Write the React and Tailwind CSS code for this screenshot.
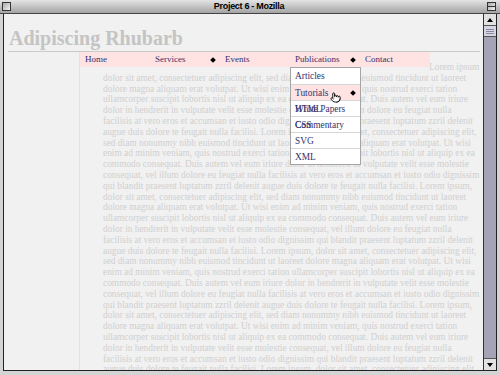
import React from "react";
import { Pointer } from "lucide-react";

const base =
  "dolor sit amet, consectetuer adipiscing elit, sed diam nonummy nibh euismod tincidunt ut laoreet dolore magna aliquam erat volutpat. Ut wisi enim ad minim veniam, quis nostrud exerci tation ullamcorper suscipit lobortis nisl ut aliquip ex ea commodo consequat. Duis autem vel eum iriure dolor in hendrerit in vulputate velit esse molestie consequat, vel illum dolore eu feugiat nulla facilisis at vero eros et accumsan et iusto odio dignissim qui blandit praesent luptatum zzril delenit augue duis dolore te feugait nulla facilisi.";
const body =
  "Lorem ipsum " +
  base +
  " Lorem ipsum, " +
  base +
  " Lorem ipsum, " +
  base +
  " Lorem ipsum, " +
  base +
  " Lorem ipsum, " +
  base +
  " Lorem ipsum, " +
  base +
  " Lorem ipsum, " +
  base;

function Diamond() {
  return <span className="block w-[4px] h-[4px] rotate-45 bg-black shrink-0" />;
}

function NavCell({ label, arrow }) {
  return (
    <div className="w-[70px] h-full px-[5px] flex items-center justify-between">
      <span className="leading-none">{label}</span>
      {arrow && <Diamond />}
    </div>
  );
}

function MenuItem({ children, first, active, arrow }) {
  return (
    <div
      className={
        "h-[16px] pl-[4px] pr-[5px] flex items-center justify-between leading-[16px] " +
        (first ? "" : "border-t border-[#d6d6d6] ") +
        (active ? "bg-[#ffe3e3]" : "bg-white")
      }
    >
      {children}
      {arrow && <Diamond />}
    </div>
  );
}

function Stack({ a, b }) {
  return (
    <span className="grid">
      <span className="col-start-1 row-start-1">{a}</span>
      <span className="col-start-1 row-start-1">{b}</span>
    </span>
  );
}

export default function App() {
  return (
    <div className="w-[500px] h-[375px] bg-[#d4d4d4] flex flex-col overflow-hidden">
      {/* title bar */}
      <div className="h-[14px] shrink-0 flex items-center px-[2px] bg-gradient-to-b from-[#e4e4e4] to-[#a4a4a4] border-b border-[#444]">
        <div className="w-[9px] h-[9px] border border-[#333] bg-gradient-to-br from-[#a8a8a8] to-[#f4f4f4]" />
        <div className="flex-1 flex justify-center">
          <span className="font-['Liberation_Sans',sans-serif] font-bold text-[9px] tracking-[-0.3px] leading-none text-black">
            Project 6 - Mozilla
          </span>
        </div>
        <div className="w-[9px] h-[9px] mr-[2px] border border-[#333] bg-gradient-to-br from-[#a8a8a8] to-[#f4f4f4] flex flex-col justify-center">
          <div className="h-[1px] bg-[#333]" />
        </div>
      </div>

      {/* window body */}
      <div className="flex-1 mx-[3px] mb-[4px] flex border-l border-r border-b border-[#222] min-h-0">
        <div className="flex-1 min-w-0 bg-[#f1f1f1] flex flex-col overflow-hidden font-['Liberation_Serif',serif]">
          <h1 className="mt-[12px] ml-[5px] text-[20px] leading-[24px] font-bold text-[#c4c4c4]">
            Adipiscing Rhubarb
          </h1>
          <div className="mt-[1px] ml-[4px] mr-[3px] h-[1px] bg-[#cacaca] shrink-0" />
          <div className="flex flex-1 min-h-0">
            <div className="w-[76px] shrink-0 border-r border-[#e2e2e2]" />
            <div className="flex-1 min-w-0 flex flex-col">
              <div className="relative z-10">
                <div className="h-[15px] w-[350px] bg-[#ffe2e2] flex text-[9px] text-[#33336e]">
                  <NavCell label="Home" />
                  <NavCell label="Services" arrow />
                  <NavCell label="Events" />
                  <NavCell label="Publications" arrow />
                  <NavCell label="Contact" />
                </div>
                <div className="absolute left-[210px] top-[15px] w-[71px] border border-[#a4a4a4] bg-white text-[9.4px] text-[#33336e]">
                  <MenuItem first>Articles</MenuItem>
                  <MenuItem active arrow>Tutorials</MenuItem>
                  <MenuItem>
                    <Stack a="White Papers" b="HTML" />
                  </MenuItem>
                  <MenuItem>
                    <Stack a="Commentary" b="CSS" />
                  </MenuItem>
                  <MenuItem>SVG</MenuItem>
                  <MenuItem>XML</MenuItem>
                  <div className="absolute left-[39px] top-[24px]">
                    <Pointer size={11} fill="white" stroke="black" strokeWidth={2} />
                  </div>
                </div>
              </div>
              <p className="mt-[-5px] pl-[23px] pr-[2px] text-[9.4px] leading-[10.8px] text-[#d0d0d0] indent-[326px]">
                {body}
              </p>
            </div>
          </div>
        </div>

        {/* scrollbar */}
        <div className="w-[13px] shrink-0 border-l border-[#333] bg-[#a4a4b6] flex flex-col">
          <div className="h-[12px] bg-[#e2e2e2] border-b border-[#555] flex items-center justify-center">
            <div className="w-0 h-0 border-l-[3px] border-r-[3px] border-b-[4px] border-l-transparent border-r-transparent border-b-black" />
          </div>
          <div className="h-[11px] bg-[#d6d6e2] border-b border-[#555] flex flex-col justify-center gap-[1px] px-[2px]">
            <div className="h-[1px] bg-[#8888a0]" />
            <div className="h-[1px] bg-[#8888a0]" />
            <div className="h-[1px] bg-[#8888a0]" />
          </div>
          <div className="flex-1" />
          <div className="h-[12px] bg-[#e2e2e2] border-t border-[#555] flex items-center justify-center">
            <div className="w-0 h-0 border-l-[3px] border-r-[3px] border-t-[4px] border-l-transparent border-r-transparent border-t-black" />
          </div>
        </div>
      </div>
    </div>
  );
}
